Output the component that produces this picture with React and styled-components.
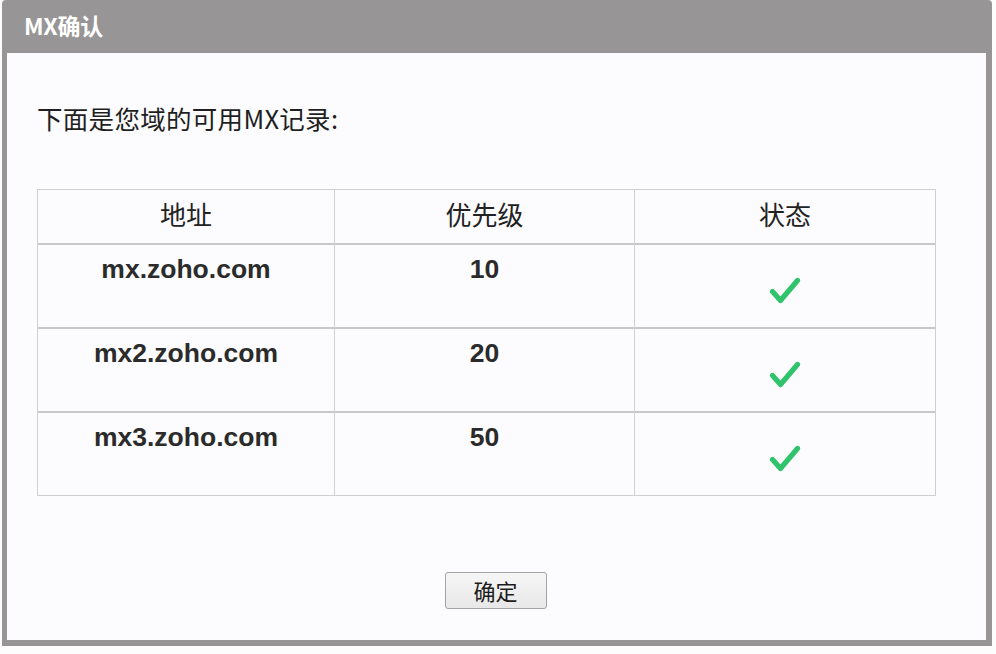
import React from "react";
import styled, { createGlobalStyle } from "styled-components";

const GlobalStyle = createGlobalStyle`
  html, body {
    margin: 0;
    padding: 0;
    background: #fdfdfd;
  }
  body {
    font-family: "Noto Sans CJK SC", "Noto Sans", "Liberation Sans", sans-serif;
  }
`;

const Page = styled.div`
  width: 996px;
  height: 654px;
  padding-left: 2px;
  box-sizing: border-box;
`;

const Dialog = styled.div`
  width: 990px;
  height: 646px;
  box-sizing: border-box;
  display: flex;
  flex-direction: column;
  background: #979595;
  border-radius: 4px 4px 0 0;
  padding: 0 6px 6px 5px;
`;

const TitleBar = styled.div`
  height: 53px;
  display: flex;
  align-items: center;
  padding-left: 17px;
  padding-bottom: 3px;
  box-sizing: border-box;
  color: #ffffff;
  font-size: 23px;
  font-weight: 700;
  letter-spacing: -0.3px;
`;

const Body = styled.div`
  flex: 1;
  background: #fcfbfd;
  display: flex;
  flex-direction: column;
  padding: 48px 50px 0 30px;
`;

const Intro = styled.p`
  margin: 0;
  font-size: 25.5px;
  line-height: 34px;
  color: #1f1f1f;
  font-weight: 400;
  letter-spacing: 0.3px;
`;

const Grid = styled.div`
  margin-top: 54px;
  width: 899px;
  box-sizing: border-box;
  border: 1px solid #cfcfcf;
  display: grid;
  grid-template-columns: 297px 300px 1fr;
`;

const Cell = styled.div`
  box-sizing: border-box;
  border-right: ${(p) => (p.$last ? "none" : "1px solid #d2d2d2")};
  border-bottom: ${(p) => (p.$bottom ? "none" : "2px solid #c8c8c8")};
  display: flex;
  justify-content: center;
  align-items: ${(p) => (p.$head ? "center" : "flex-start")};
  height: ${(p) => (p.$head ? "55px" : p.$bottom ? "82px" : "84px")};
  padding-top: ${(p) => (p.$head ? "0" : p.$icon ? "30px" : "9px")};
  padding-bottom: ${(p) => (p.$head ? "5px" : "0")};
`;

const HeadText = styled.span`
  font-size: 26px;
  color: #222222;
  font-weight: 400;
  line-height: 30px;
`;

const ValueText = styled.span`
  font-family: "Liberation Sans", Arial, sans-serif;
  font-size: 26.5px;
  font-weight: 700;
  color: #2b2b2b;
  line-height: 30px;
`;

const Footer = styled.div`
  flex: 1;
  display: flex;
  justify-content: center;
  padding-top: 76px;
  padding-left: 18px;
`;

const Button = styled.button`
  width: 102px;
  height: 37px;
  box-sizing: border-box;
  border: 1px solid #a3a3a3;
  border-radius: 3px;
  background: linear-gradient(#f6f6f6, #e8e8e8);
  font-family: "Noto Sans CJK SC", sans-serif;
  font-size: 22px;
  color: #1c1c1c;
  padding: 0 0 2px;
  cursor: pointer;
`;

const Check = () => (
  <svg width="34" height="32" viewBox="0 0 34 32">
    <path
      d="M4.5 16.5 L12.5 25.5 L29.5 5.5"
      fill="none"
      stroke="#2fc36c"
      strokeWidth="5.2"
      strokeLinecap="round"
      strokeLinejoin="round"
    />
  </svg>
);

const records = [
  { host: "mx.zoho.com", priority: 10 },
  { host: "mx2.zoho.com", priority: 20 },
  { host: "mx3.zoho.com", priority: 50 },
];

export default function App() {
  return (
    <>
      <GlobalStyle />
      <Page>
        <Dialog>
          <TitleBar>MX确认</TitleBar>
          <Body>
            <Intro>下面是您域的可用MX记录:</Intro>
            <Grid>
              <Cell $head>
                <HeadText>地址</HeadText>
              </Cell>
              <Cell $head>
                <HeadText>优先级</HeadText>
              </Cell>
              <Cell $head $last>
                <HeadText>状态</HeadText>
              </Cell>
              {records.map((r, i) => {
                const bottom = i === records.length - 1;
                return (
                  <React.Fragment key={r.host}>
                    <Cell $bottom={bottom}>
                      <ValueText>{r.host}</ValueText>
                    </Cell>
                    <Cell $bottom={bottom}>
                      <ValueText>{r.priority}</ValueText>
                    </Cell>
                    <Cell $bottom={bottom} $last $icon>
                      <Check />
                    </Cell>
                  </React.Fragment>
                );
              })}
            </Grid>
            <Footer>
              <Button>确定</Button>
            </Footer>
          </Body>
        </Dialog>
      </Page>
    </>
  );
}
